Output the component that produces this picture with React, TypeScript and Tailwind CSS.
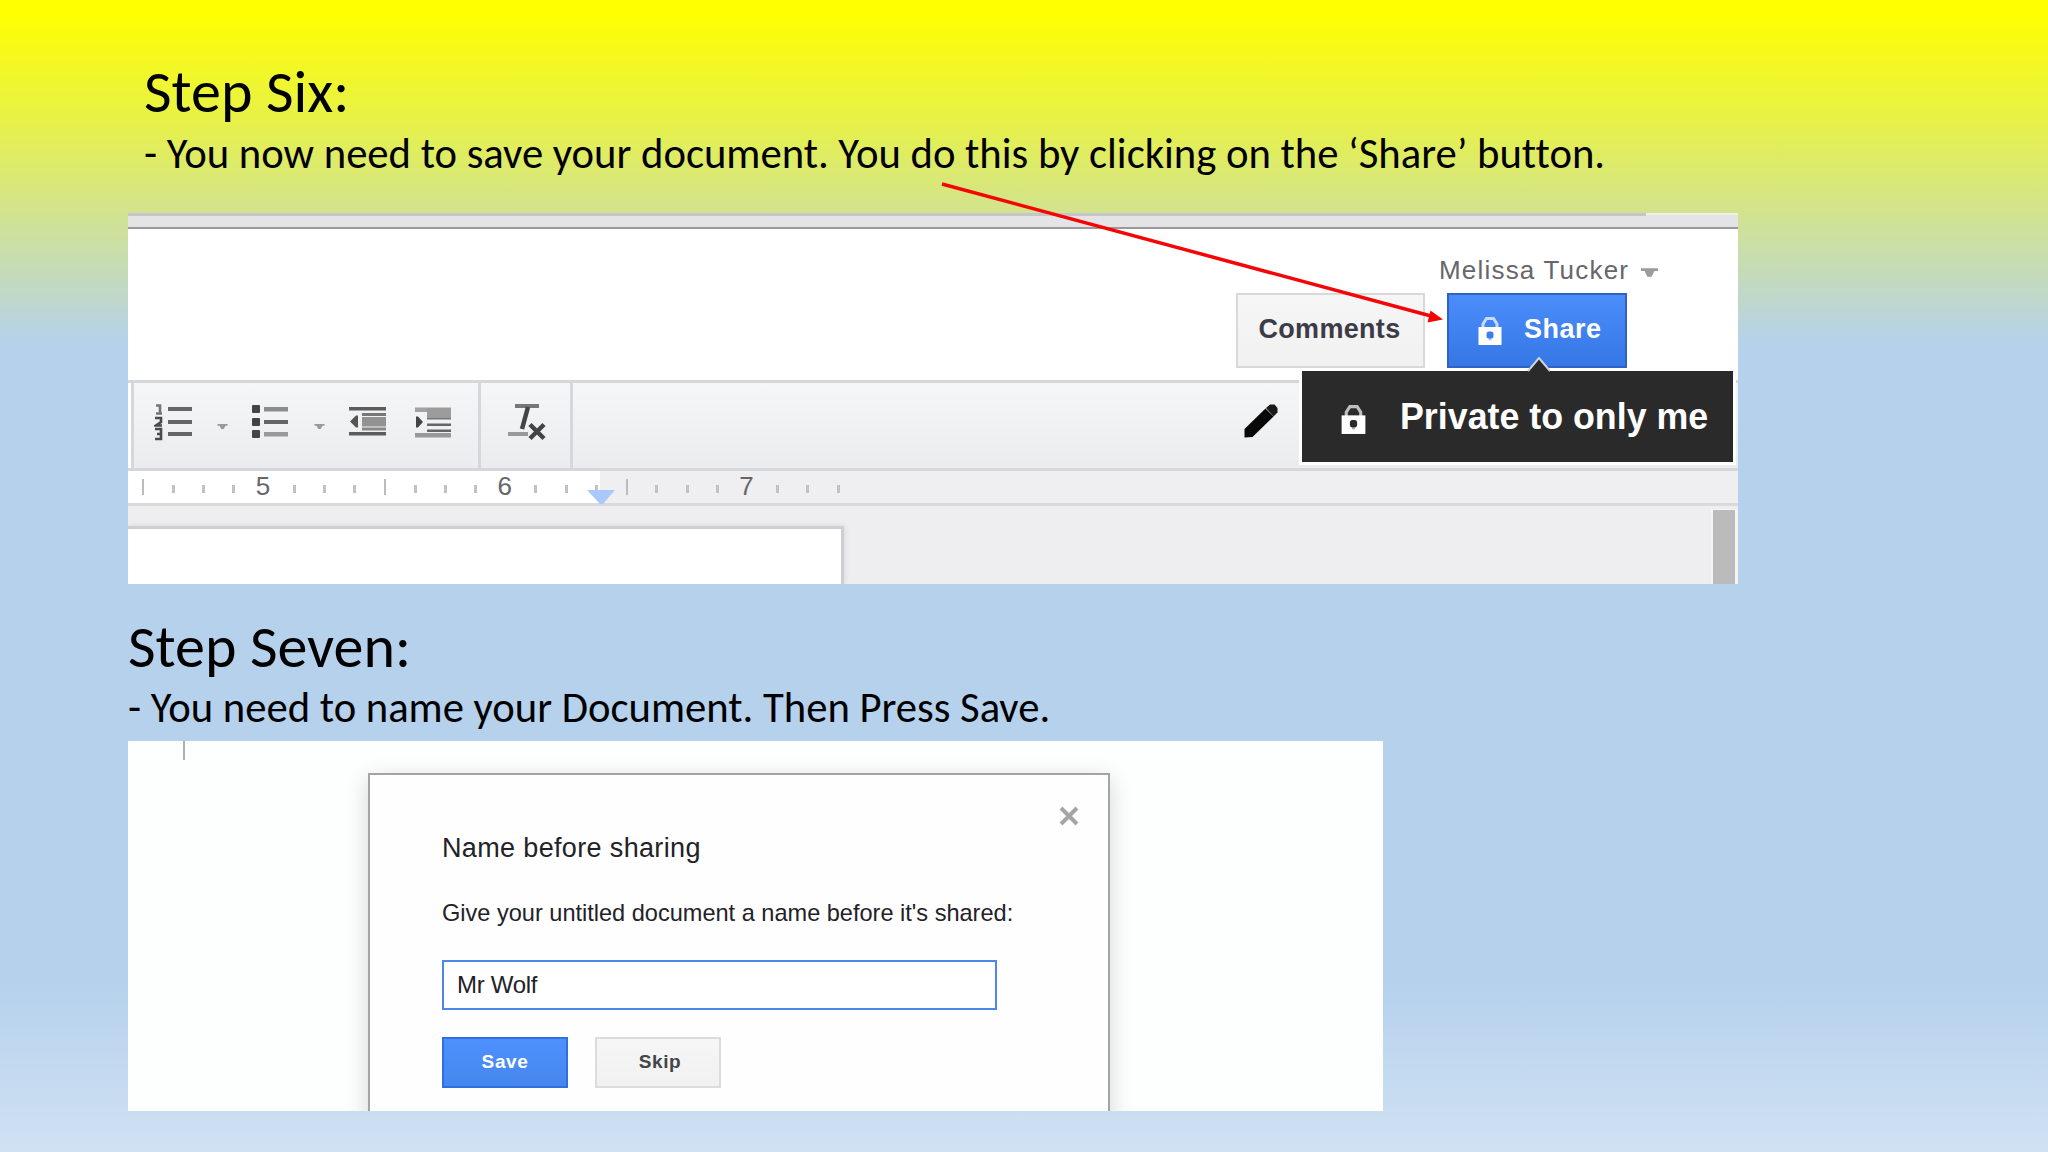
import React from 'react';

// One slot per eighth of an inch, starting at 4 1/2
const rulerMarks: string[] = [
  'tall', '', '', '', '5', '', '', '',
  'tall', '', '', '', '6', '', '', '',
  'tall', '', '', '', '7', '', '', '',
];

const LockIcon: React.FC<{ className: string; hole: string }> = ({ className, hole }) => (
  <svg viewBox="0 0 24 30" className={className}>
    <path d="M5 12V8l3.500-5.500h7L19 8v4" fill="none" stroke="currentColor" strokeWidth="3" opacity="0.7" />
    <rect x="0.5" y="11" width="23" height="18" fill="currentColor" />
    <rect x="8.500" y="15.500" width="7" height="7" rx="2.500" fill={hole} />
    <rect x="10.500" y="22" width="3" height="2.500" fill={hole} opacity="0.4" />
  </svg>
);

const Caret: React.FC<{ className: string }> = ({ className }) => (
  <svg viewBox="0 0 12 6" className={className}>
    <path d="M0 0h12v2H9.5L7.5 6h-3L2.500 2H0z" fill="currentColor" />
  </svg>
);

const NumberedListIcon = () => (
  <svg viewBox="0 0 40 40" className="w-10 h-10">
    <g fill="none" stroke="#4a4a4a" strokeWidth="2.6">
      <path d="M2 3.500h4v9M2 11.500h6" opacity="0.75" />
      <path d="M1 16h6v4l-5 3.500h6" />
      <path d="M1 27h6v10H1M3 32h4" />
    </g>
    <g fill="#666">
      <rect x="14" y="5" width="24" height="4" />
      <rect x="14" y="18" width="24" height="4" />
      <rect x="14" y="30" width="24" height="4" />
    </g>
  </svg>
);

const BulletListIcon = () => (
  <svg viewBox="0 0 40 40" className="w-10 h-10">
    <g fill="#444">
      <rect x="1" y="3" width="8" height="8" rx="1" />
      <rect x="1" y="16" width="8" height="8" rx="1" />
      <rect x="1" y="28" width="8" height="8" rx="1" />
    </g>
    <rect x="13" y="5" width="24" height="4.500" fill="#8b8b8b" />
    <rect x="13" y="18" width="24" height="4" fill="#666" />
    <rect x="13" y="30" width="24" height="4.500" fill="#999" />
  </svg>
);

const OutdentIcon = () => (
  <svg viewBox="0 0 40 40" className="w-10 h-10">
    <rect x="1" y="5" width="37" height="3.500" fill="#5c5c5c" />
    <rect x="1" y="30" width="37" height="3.500" fill="#5c5c5c" />
    <rect x="14" y="11" width="24" height="3" fill="#777" />
    <rect x="14" y="15" width="24" height="9.500" fill="#929292" />
    <rect x="14" y="25.500" width="24" height="3" fill="#888" />
    <path d="M2 19.500l6-6h2v12H8z" fill="#555" />
  </svg>
);

const IndentIcon = () => (
  <svg viewBox="0 0 40 40" className="w-10 h-10">
    <rect x="1" y="5.500" width="36" height="4.500" fill="#a2a2a2" />
    <rect x="13" y="6" width="24" height="10" fill="#9c9c9c" />
    <rect x="13" y="16" width="24" height="1.500" fill="#777" />
    <rect x="13" y="21.500" width="24" height="2.500" fill="#666" />
    <rect x="13" y="27.500" width="24" height="2.500" fill="#666" />
    <rect x="1" y="31" width="36" height="4.500" fill="#999" />
    <path d="M2 14.500h2l5 5.500-5 5.500H2z" fill="#444" />
  </svg>
);

const ClearFormattingIcon = () => (
  <svg viewBox="0 0 40 40" className="w-10 h-10">
    <rect x="8" y="2" width="24" height="4" fill="#777" />
    <rect x="1" y="30" width="20" height="4" fill="#999" />
    <path d="M21 5l-6 22" stroke="#444" strokeWidth="4.500" />
    <path d="M23 22.500l14 14M37 22.500l-14 14" stroke="#444" strokeWidth="4.500" />
  </svg>
);

const PencilIcon = () => (
  <svg viewBox="0 0 34 34" className="w-[34px] h-[34px]">
    <path d="M0.500 33.500V25L21.500 4.500l8 8L8.500 33z" fill="#080808" />
    <path d="M22 4L26 0.500h4.500L33.500 4v4.500l-4 4z" fill="#1a1a1a" />
  </svg>
);

// Google Docs header with the share button and its tooltip
const DocsToolbar: React.FC = () => {
  return (
    <div className="relative ml-32 w-[1610px] h-[371px] flex flex-col bg-white overflow-hidden font-['Liberation_Sans',sans-serif]">
      <div className="h-4 shrink-0 flex border-b-2 border-[#9a9a9b] bg-[#e4e4e6]">
        <div className="w-[1518px] border-t-[3px] border-[#c5c6ca]" />
        <div className="flex-1 border-t-2 border-[#eef0ea]" />
      </div>

      <div className="h-[151px] shrink-0 pt-[26px] flex flex-col">
        <div className="h-[30px] ml-[1311px] flex items-center">
          <span className="w-[202px] text-[26px] leading-[30px] tracking-[1.2px] text-[#66666c] whitespace-nowrap">Melissa Tucker</span>
          <Caret className="w-[17px] h-[9px] mt-[5px] text-[#9c9c9e]" />
        </div>
        <div className="mt-2 ml-[1108px] flex">
          <button className="w-[189px] h-[75px] pb-[3px] pr-[2px] border-2 border-[#d9d9db] bg-linear-to-b from-[#f6f6f6] to-[#f1f1f1] text-[27px] font-bold tracking-[0.3px] text-[#3c3c46]">
            Comments
          </button>
          <button className="ml-[22px] w-[180px] h-[75px] pl-[29px] pb-[3px] border-2 border-[#2f62c4] bg-linear-to-b from-[#4b8dfb] to-[#3577e4] flex items-center text-[27px] font-bold tracking-[0.5px] text-white">
            <LockIcon className="w-6 h-[30px] mr-[22px] mt-[3px]" hole="#3c7eee" />
            Share
          </button>
        </div>
      </div>

      <div className="h-[91px] shrink-0 flex border-y-[3px] border-[#d6d7da] bg-linear-to-b from-[#f5f6f7] to-[#ebecee]">
        <div className="w-[3px] bg-white" />
        <div className="w-[350px] pt-[19px] pl-5 flex border-x-[3px] border-[#d6d7da]">
          <NumberedListIcon />
          <Caret className="w-[11px] h-[5px] ml-[23px] mt-[22px] text-[#999]" />
          <div className="ml-[23px]"><BulletListIcon /></div>
          <Caret className="w-[11px] h-[5px] ml-[23px] mt-[22px] text-[#999]" />
          <div className="ml-[23px]"><OutdentIcon /></div>
          <div className="ml-[26px]"><IndentIcon /></div>
        </div>
        <div className="w-[92px] pt-[19px] pl-[26px] border-r-[3px] border-[#d6d7da]">
          <ClearFormattingIcon />
        </div>
        <div className="ml-[671px] mt-[21px]">
          <PencilIcon />
        </div>
      </div>

      <div className="relative h-[35px] shrink-0 border-b-[3px] border-[#dadadd] bg-[#efeff1]">
        <div className="h-8 w-[472px] bg-white">
          <div className="flex h-8 w-[726px]">
            {rulerMarks.map((mark, i) => (
              <div key={i} className="w-[30.23px] shrink-0 flex justify-center items-start">
                {mark === 'tall' && <div className="mt-2 w-[2px] h-4 bg-[#bcbcbe]" />}
                {mark === '' && <div className="mt-[14px] w-[3px] h-2 bg-[#c2c2c4]" />}
                {mark !== 'tall' && mark !== '' && (
                  <span className="mr-[2px] text-[26px] leading-[30px] text-[#66666a]">{mark}</span>
                )}
              </div>
            ))}
          </div>
        </div>
        <svg viewBox="0 0 28 14" className="absolute left-[459px] top-[19px] w-7 h-[14px]">
          <path d="M0 0h28L16 14h-3z" fill="#aac8fb" />
        </svg>
      </div>

      <div className="flex-1 flex justify-between bg-[#eeedef]">
        <div className="mt-5 w-[716px] border-t-[3px] border-r-[3px] border-[#d0ced1] bg-white shadow-[0_0_6px_rgba(0,0,0,0.1)]" />
        <div className="mt-[3px] w-[27px] border-l-2 border-r-[3px] border-t border-[#f5f5f6] bg-[#bbbbbb]" />
      </div>

      {/* Tooltip under the share button */}
      <div className="absolute left-[1174px] top-[158px] w-[431px] h-[91px] pl-[39px] flex items-center bg-[#2b2a2b] text-white ring-[3px] ring-white">
        <LockIcon className="w-[25px] h-[31px] mt-[6px] shrink-0" hole="#2b2a2b" />
        <span className="ml-[34px] mt-[1px] text-[37px] leading-[44px] font-bold whitespace-nowrap inline-block origin-left scale-x-[0.967]">Private to only me</span>
        <svg viewBox="0 0 24 15" className="absolute left-[225px] -top-[14px] w-6 h-[15px]">
          <path d="M1 14L12 1l11 13" fill="#2b2a2b" stroke="#cdd3dc" strokeWidth="2" />
          <path d="M3 15L12 4l9 11z" fill="#2b2a2b" />
        </svg>
      </div>
    </div>
  );
};

// Dialog asking for a document name
const NameDialog: React.FC = () => {
  return (
    <div className="ml-32 w-[1255px] h-[370px] flex bg-[#fdfefe] overflow-hidden font-['Liberation_Sans',sans-serif]">
      <div className="ml-[55px] w-[2px] h-[19px] bg-[#b0b0b0]" />
      <div className="ml-[183px] mt-[32px] w-[742px] h-[400px] shrink-0 border-2 border-[#a3a4a4] bg-[#fefefe] shadow-[0_6px_22px_rgba(0,0,0,0.16)] text-[#222228]">
        <div className="h-[51px] flex justify-end items-end pr-[29px]">
          <svg viewBox="0 0 20 20" className="w-5 h-5">
            <path d="M2 2l16 16M18 2L2 18" stroke="#a5a5a5" strokeWidth="4" />
          </svg>
        </div>
        <div className="pl-[72px] flex flex-col items-start whitespace-nowrap">
          <h2 className="mt-[7px] text-[27px] leading-[30px] tracking-[0.35px]">Name before sharing</h2>
          <p className="mt-[35px] text-[24px] leading-[30px] origin-left scale-x-[0.981]">Give your untitled document a name before it's shared:</p>
          <input
            defaultValue="Mr Wolf"
            className="mt-[32px] w-[555px] h-[50px] pl-[13px] pb-[1px] border-2 border-[#4f86e8] bg-white text-[24px] tracking-[-0.3px] outline-none"
          />
          <div className="mt-[27px] flex text-[19px] font-bold tracking-[0.6px]">
            <button className="w-[126px] h-[51px] pb-[1px] border-2 border-[#2f70e0] bg-linear-to-b from-[#4d90fe] to-[#4686ee] text-white">Save</button>
            <button className="ml-[27px] w-[126px] h-[51px] pb-[1px] pl-1 border-2 border-[#dcdcdd] bg-linear-to-b from-[#f5f6f5] to-[#f1f1f2] text-[#44444a]">Skip</button>
          </div>
        </div>
      </div>
    </div>
  );
};

const App: React.FC = () => {
  return (
    <div className="relative w-[2048px] h-[1152px] overflow-hidden flex flex-col bg-[linear-gradient(to_bottom,#ffff00_0px,#ffff00_12px,#e5f04f_130px,#d0e294_220px,#b5d1ec_345px,#b5d1ec_980px,#d0e1f3_1152px)] text-black font-[Carlito,Lato,sans-serif] [font-variant-ligatures:none]">
      <section className="h-[213px] shrink-0 pt-[62px] pl-[144px] whitespace-nowrap">
        <h1 className="text-[60px] leading-[60px]">Step Six:</h1>
        <p className="mt-[6px] text-[42.67px] leading-[50px]">- You now need to save your document. You do this by clicking on the ‘Share’ button.</p>
      </section>
      <DocsToolbar />

      <section className="h-[157px] shrink-0 pt-[33px] pl-[128px] whitespace-nowrap">
        <h1 className="text-[60px] leading-[60px]">Step Seven:</h1>
        <p className="mt-[5px] text-[42.67px] leading-[50px]">- You need to name your Document. Then Press Save.</p>
      </section>
      <NameDialog />

      {/* Arrow pointing at the share button */}
      <svg viewBox="0 0 504 146" className="absolute left-[940px] top-[180px] w-[504px] h-[146px]">
        <path d="M2 4L491 136" stroke="#f40606" strokeWidth="3.5" />
        <path d="M503 139.500L487.500 142.500L490.500 130.500z" fill="#f40606" />
      </svg>
    </div>
  );
};

export default App;
